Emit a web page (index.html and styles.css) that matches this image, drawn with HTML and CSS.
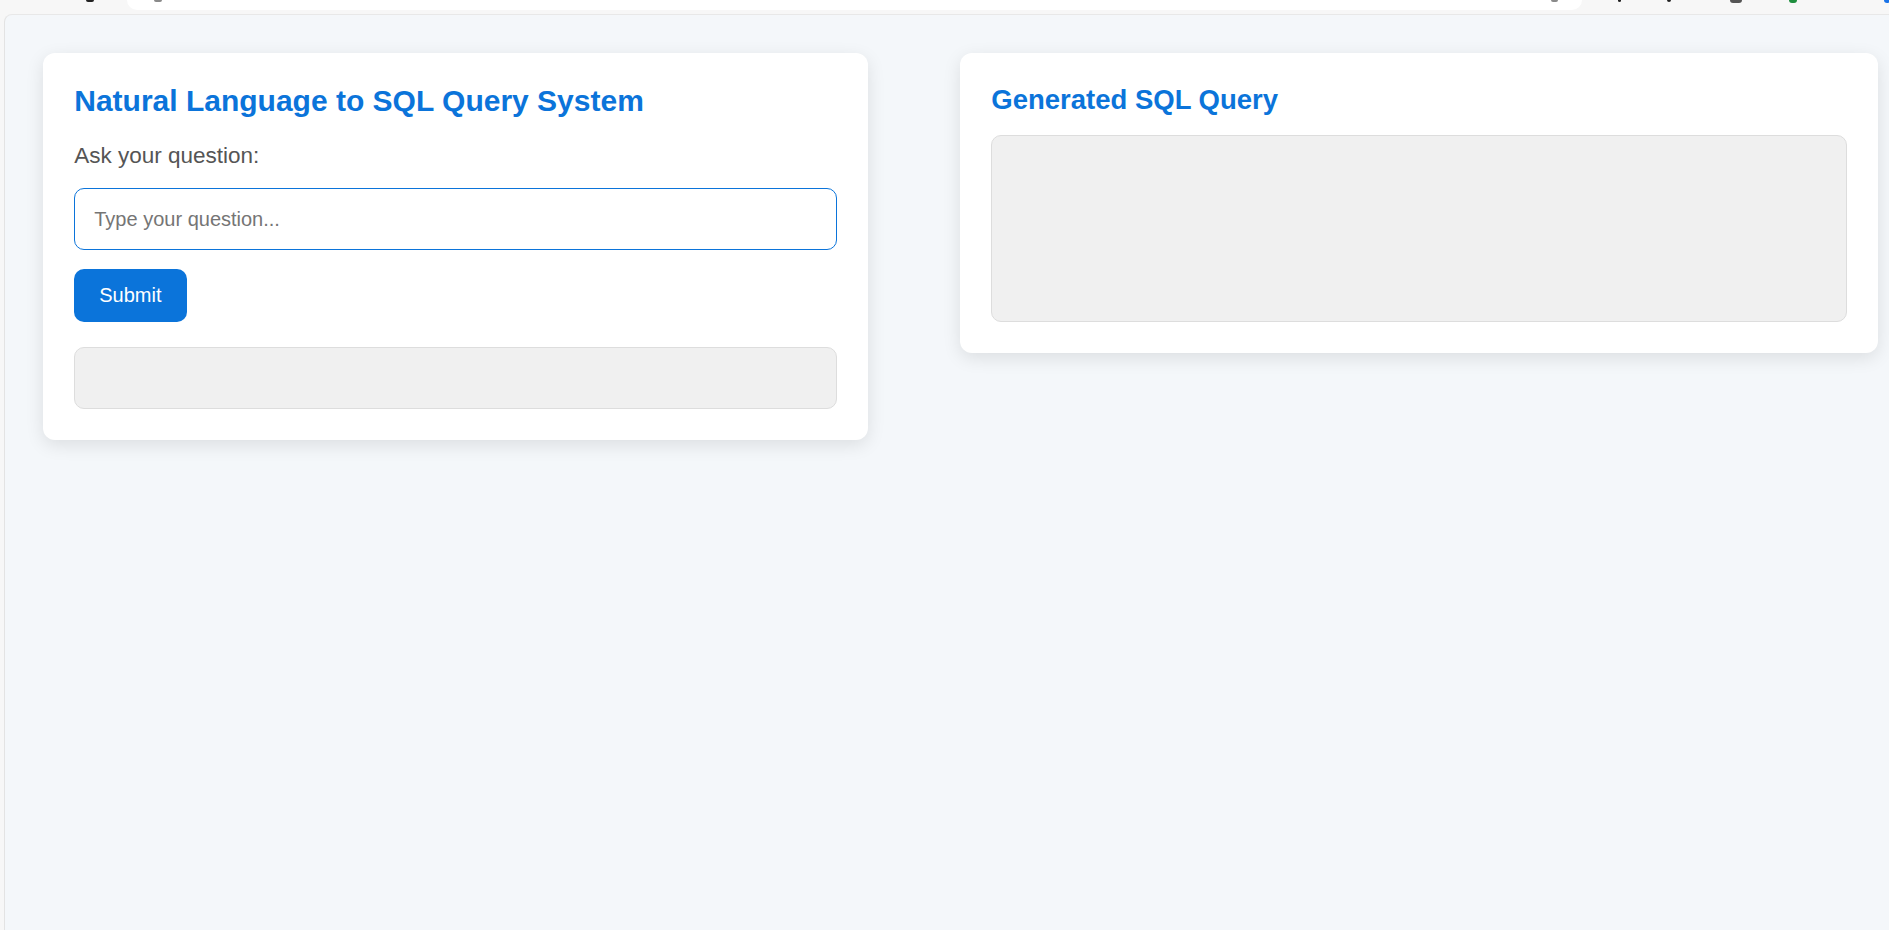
FILE: index.html
```html
<!DOCTYPE html>
<html lang="en">
<head>
<meta charset="utf-8">
<title>Natural Language to SQL Query System</title>
<link rel="stylesheet" href="styles.css">
</head>
<body>
<div class="chrome">
  <span class="frag frag-dark frag-a"></span>
  <div class="address">
    <span class="frag frag-gray frag-b"></span>
    <span class="addr-spacer"></span>
    <span class="frag frag-gray frag-c"></span>
  </div>
  <span class="frag frag-dark frag-d"></span>
  <span class="frag frag-dark frag-e"></span>
  <span class="frag frag-box frag-f"></span>
  <span class="frag frag-green frag-g"></span>
  <span class="frag frag-blue frag-h"></span>
</div>
<div class="viewport">
  <main class="main">
    <section class="card card-ask">
      <h2 class="title">Natural Language to SQL Query System</h2>
      <label class="ask-label" for="question">Ask your question:</label>
      <input class="question-input" id="question" type="text" placeholder="Type your question..." autofocus>
      <button class="submit-btn" type="button">Submit</button>
      <div class="result-box"></div>
    </section>
    <section class="card card-sql">
      <h3 class="title title-sql">Generated SQL Query</h3>
      <div class="sql-box"></div>
    </section>
  </main>
</div>
</body>
</html>
```

FILE: styles.css
```css
html, body {
  margin: 0;
  padding: 0;
  height: 100%;
}

body {
  background: #f7f7f7;
  font-family: "Liberation Sans", Arial, sans-serif;
  overflow: hidden;
}

/* browser chrome strip at the very top */
.chrome {
  height: 14px;
  display: flex;
  align-items: flex-start;
}

.frag {
  display: block;
  flex: none;
}

.frag-dark {
  background: #222;
  height: 2px;
  border-radius: 0 0 2px 2px;
}

.frag-gray {
  background: #8a8a8a;
  height: 2px;
  border-radius: 0 0 2px 2px;
}

.frag-a { width: 8px; margin-left: 86px; }

.address {
  margin-left: 33px;
  width: 1455px;
  height: 10px;
  background: #ffffff;
  border-radius: 0 0 12px 12px;
  display: flex;
  align-items: flex-start;
  flex: none;
}

.frag-b { width: 8px; margin-left: 27px; }
.addr-spacer { flex: 1; }
.frag-c { width: 7px; margin-right: 24px; }

.frag-d { width: 3px; margin-left: 36px; }
.frag-e { width: 4px; margin-left: 46px; }

.frag-box {
  width: 12px;
  height: 3px;
  background: #555;
  border-radius: 0 0 4px 4px;
}
.frag-f { margin-left: 59px; }

.frag-green {
  width: 8px;
  height: 3px;
  background: #1e8e3e;
  border-radius: 0 0 4px 4px;
}
.frag-g { margin-left: 47px; }

.frag-blue {
  width: 6px;
  height: 3px;
  background: #1a73e8;
  border-radius: 0 0 3px 3px;
}
.frag-h { margin-left: 87px; }

/* page viewport */
.viewport {
  margin-left: 4px;
  height: calc(100% - 14px);
  box-sizing: border-box;
  background: #f4f7fa;
  border-left: 1px solid #e3e3e3;
  border-top: 1px solid #e8e8e8;
  border-top-left-radius: 8px;
}

.main {
  display: flex;
  align-items: flex-start;
  gap: 92px;
  padding: 38px 0 0 38px;
}

.card {
  background: #ffffff;
  border-radius: 12px;
  padding: 31.25px;
  box-sizing: border-box;
  box-shadow: 0 5px 18px rgba(0, 0, 0, 0.1);
}

.card-ask { width: 825px; }
.card-sql { width: 918px; }

.title {
  margin: 0 0 25px;
  font-size: 30px;
  font-weight: bold;
  line-height: normal;
  color: #0b74da;
}

.title-sql {
  font-size: 27.5px;
  margin-bottom: 19px;
}

.ask-label {
  display: block;
  font-size: 22.5px;
  line-height: normal;
  color: #555555;
  margin-bottom: 19px;
}

.question-input {
  display: block;
  width: 100%;
  height: 61.5px;
  box-sizing: border-box;
  padding: 0 19px;
  border: 1px solid #0b74da;
  border-radius: 10px;
  font-family: "Liberation Sans", Arial, sans-serif;
  font-size: 20px;
  color: #222;
  background: #ffffff;
  outline: none;
}

.question-input::placeholder {
  color: #757575;
}

.submit-btn {
  display: block;
  margin-top: 19px;
  padding: 15px 25px;
  border: none;
  border-radius: 10px;
  background: #0b74da;
  color: #ffffff;
  font-family: "Liberation Sans", Arial, sans-serif;
  font-size: 20px;
  line-height: normal;
  cursor: pointer;
}

.result-box {
  margin-top: 25px;
  height: 62px;
  box-sizing: border-box;
  background: #f0f0f0;
  border: 1px solid #dddddd;
  border-radius: 10px;
}

.sql-box {
  height: 186.5px;
  box-sizing: border-box;
  background: #f0f0f0;
  border: 1px solid #dddddd;
  border-radius: 10px;
}
```
